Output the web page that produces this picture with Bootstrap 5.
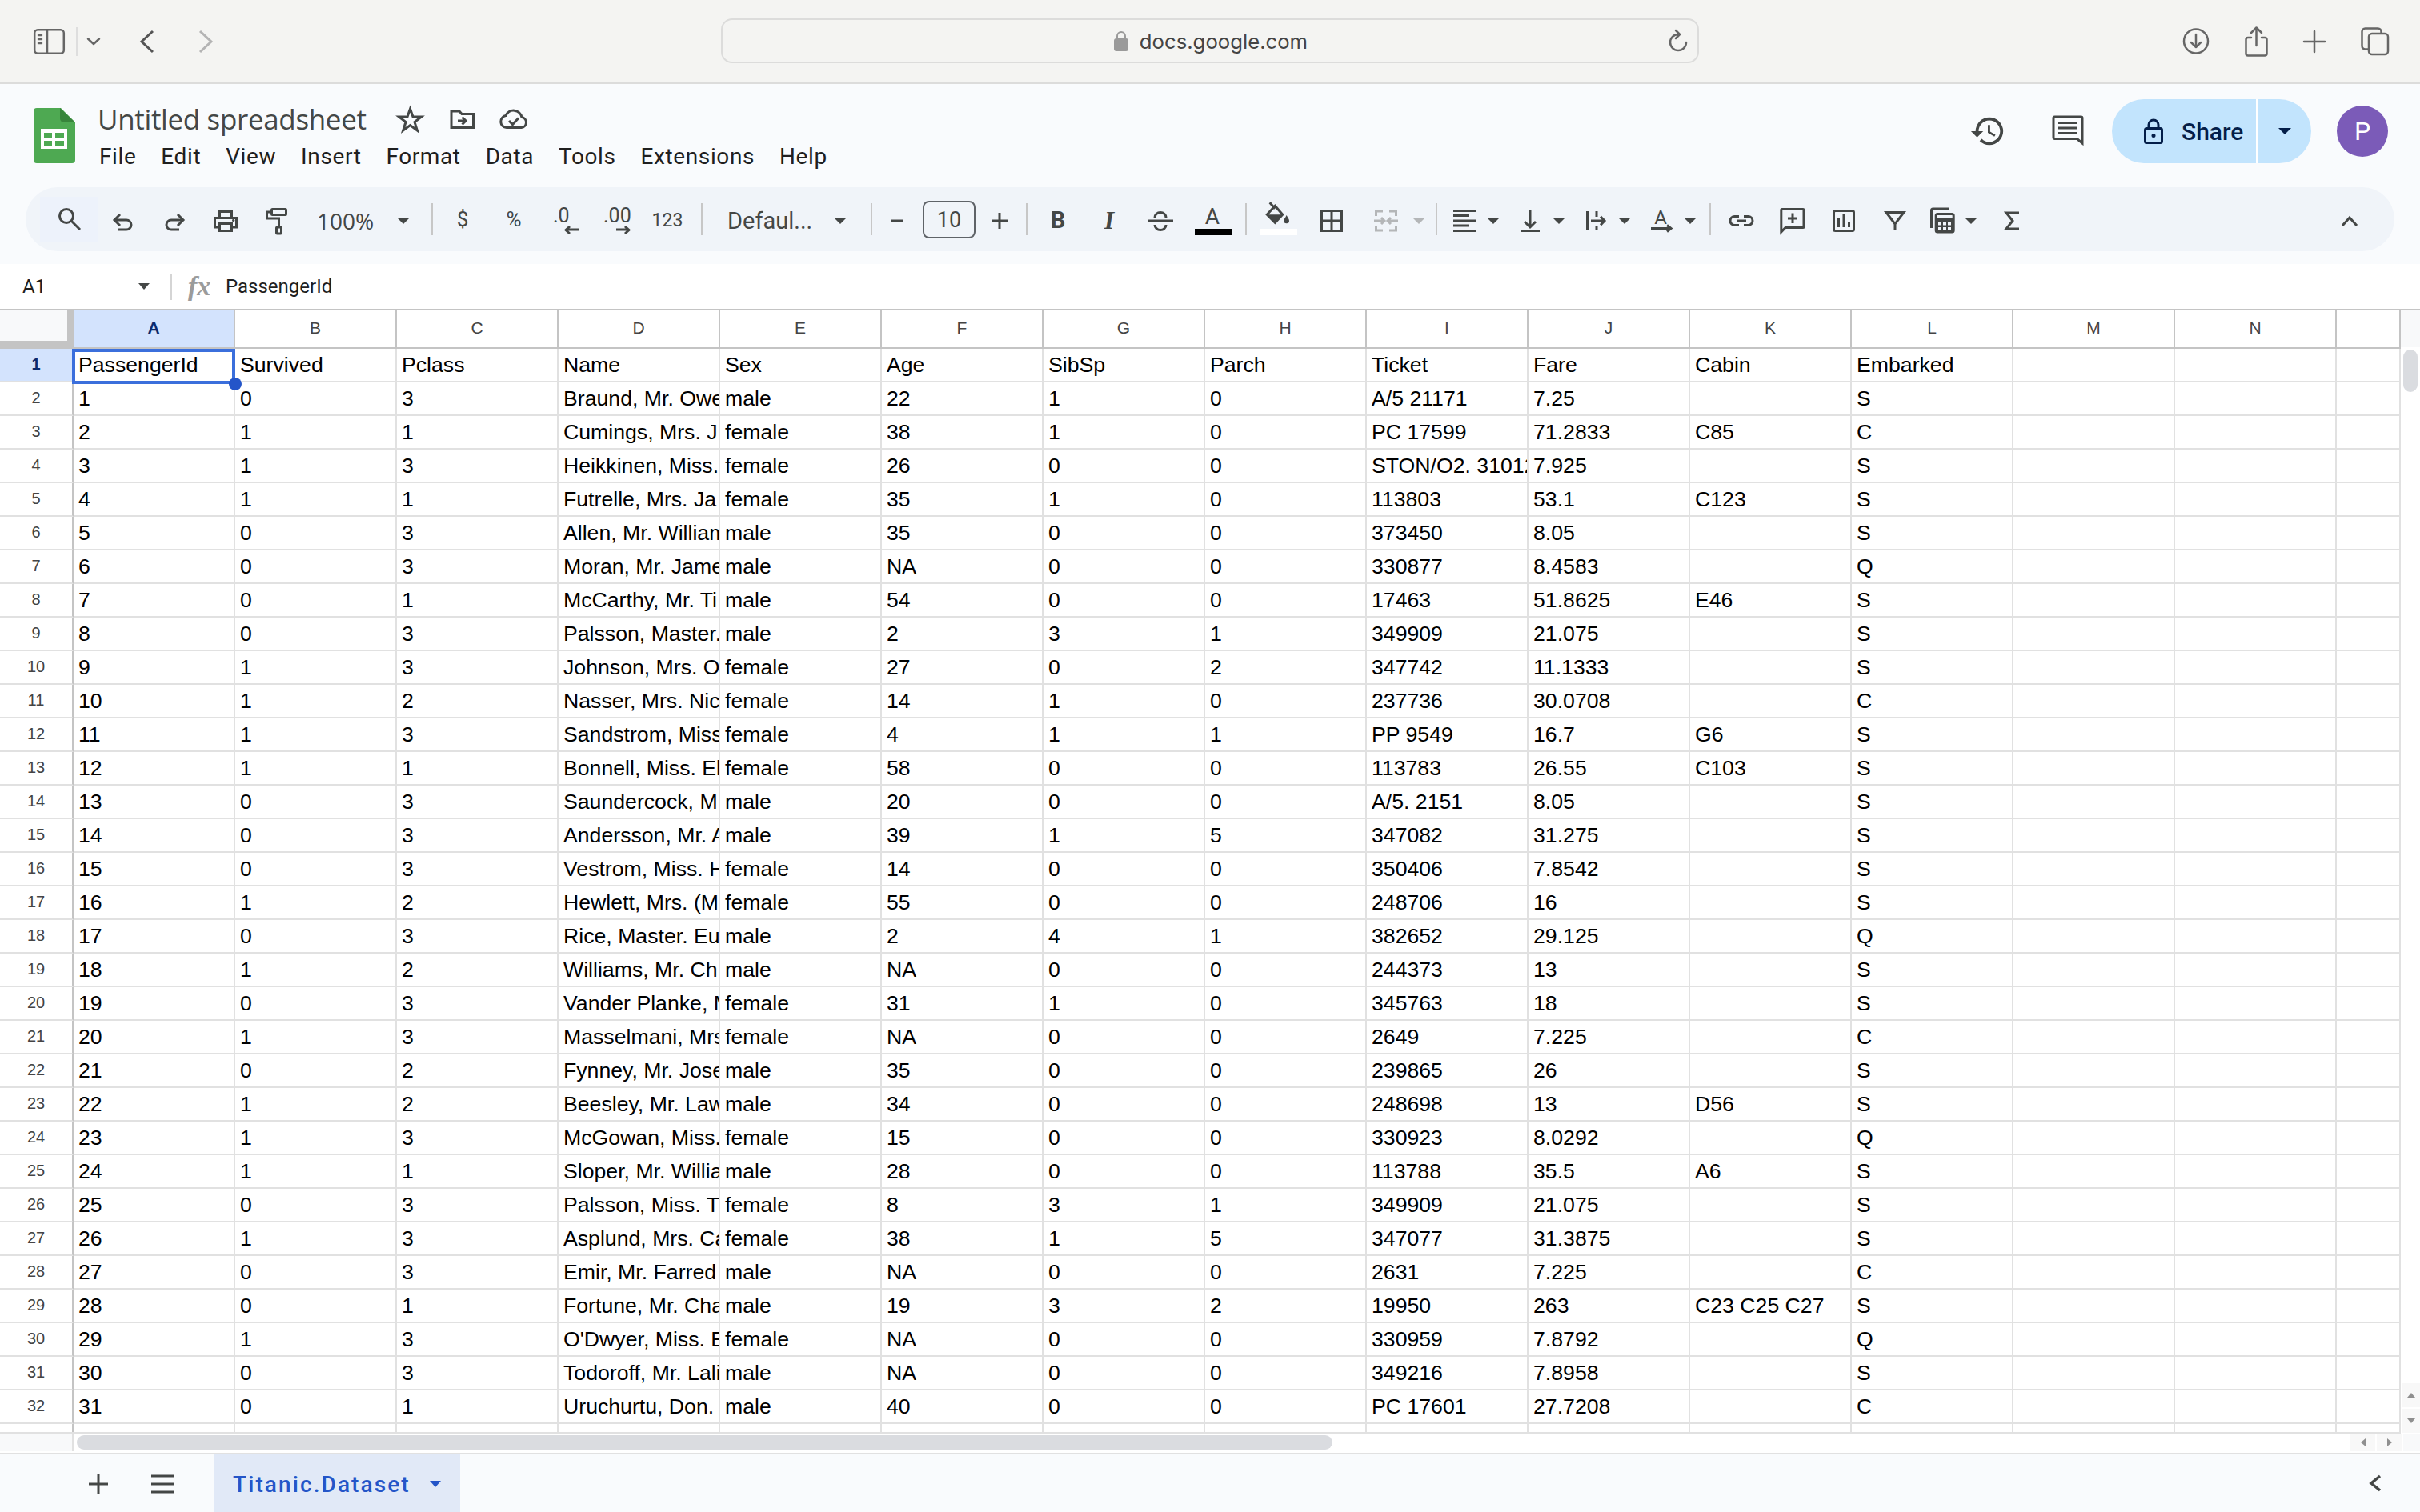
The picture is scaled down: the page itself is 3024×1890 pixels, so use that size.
<!DOCTYPE html>
<html lang="en">
<head>
<meta charset="utf-8">
<title>Untitled spreadsheet</title>
<link rel="stylesheet" href="https://cdn.jsdelivr.net/npm/bootstrap@5.3.0/dist/css/bootstrap.min.css">
<style>
html,body{width:3024px;height:1890px;overflow:hidden;background:#fff;margin:0}
svg{overflow:visible;flex:none;display:block}
.ic{fill:none;stroke:#444746;stroke-width:3}
.ic-off{stroke:#b4b6b8}
.ict{fill:#444746;font-family:Roboto,sans-serif}
.si{fill:none;stroke:#666;stroke-width:2.5;stroke-linecap:round;stroke-linejoin:round}
.safari{height:105px;background:#f4f4f2;border-bottom:2px solid #dcdcdb;flex:none}
.safari-left{width:901px;padding-left:42px}
.s-div{width:2px;height:36px;background:#dedede;margin-left:14px}
.s-chev{margin-left:12px}
.s-back{margin-left:49px}
.s-fwd{margin-left:55px}
.urlbar{width:1222px;height:56px;margin-top:-2px;border:2.5px solid #dcdcdb;border-radius:14px;font:25.7px Inter,sans-serif;color:#444;padding-left:2px}
.url-text{padding-top:2px;margin-left:14px}
.urlbar .reload{right:12px;top:12px}
.safari-right{padding-left:605px}
.sr-45{margin-left:45px}
.sr-44{margin-left:44px}
.app-head{height:225px;background:#f9fbfd;flex:none}
.head-top{height:129px;padding-left:42px;padding-right:40px}
.logo{margin-top:30px}
.doc-name{font:35px/46px "Open Sans",sans-serif;color:#444746;letter-spacing:-.35px;margin-left:28px}
.doc-col{margin-top:-1px}
.doc-title-row{margin-top:22px}
.star-ic{margin-left:38px}
.folder-ic{margin-left:33px}
.cloud-ic{margin-left:31px}
.menu-row{font:28px/40px Roboto,sans-serif;letter-spacing:.6px;color:#1f1f1f;margin-left:30px;gap:31px;margin-top:4px}
.head-right{margin-top:19px}
.comment-ic{margin-left:57px;margin-right:35px}
.share-btn{width:249px;height:80px;border-radius:40px;background:#c2e4fd;color:#041e49;font:500 30px Roboto,sans-serif}
.share-main{width:182px;border-right:2px solid #fff;height:100%;padding-left:40px;gap:23px}
.share-drop{flex:1;height:100%}
.avatar{width:64px;height:64px;background:#7b5bb8;color:#fff;font:32px Roboto,sans-serif;margin-left:32px}
.toolbar{height:80px;margin:0 32px;background:#f0f4f9;border-radius:40px;padding:4px 24px 0 18px}
.tb{width:64px;height:56px;flex:none}
.tb-search{width:72px;height:56px;background:#edf2fb;margin-top:-4px;padding-top:4px;flex:none}
.cr{width:0;height:0;border-left:8px solid transparent;border-right:8px solid transparent;border-top:8px solid #444746;flex:none}
.cr-off{border-top-color:#b4b6b8}
.cr-navy{border-top-color:#041e49}
.tb-zoom{width:159px;padding:0 25px 0 18px;font:28px "Open Sans",sans-serif;color:#444746;height:56px;flex:none}
.tb-sep{width:2px;height:40px;background:#c7c7c7;flex:none;margin-top:-4px}
.m5{margin-left:2px;margin-right:5px}
.m10{margin-left:10px;margin-right:0}
.tb-font{width:210px;padding:0 30px 0 31px;font:29px Roboto,sans-serif;color:#444746;height:56px;flex:none}
.tb-minus{width:50px;margin-left:6px;height:56px;flex:none}
.tb-size{width:66px;height:47px;margin-left:7px;margin-top:-3px;border:2px solid #5f6368;border-radius:8px;font:27px Roboto,sans-serif;color:#444746;flex:none}
.tb-plus{width:60px;height:56px;flex:none}
.tb-wide{width:66px;height:56px;flex:none}
.tb-fillbtn{margin-left:7px}
.tb-sep-3{margin-left:3px;margin-right:6px}
.tb-sep-8{margin-left:8px}
.tb-sep-86{margin-left:8px;margin-right:6px}
.tb-drop{width:82px;height:56px;padding-left:16px;flex:none}
.tb-drop .cr{margin-left:10px}
.tb-rotate{width:86px}
.tb-merge{width:89px;padding-left:17px}
.tb-merge .cr{margin-left:15px}
.tb-func{width:83px;padding-left:9px}
.formula{height:56px;background:#fff;flex:none;font:24px Roboto,sans-serif;color:#1f1f1f;padding-left:28px}
.name-box{width:167px}
.name-box .cr{border-left-width:7px;border-right-width:7px;border-top-width:8px;margin-left:auto;margin-right:8px}
.name-sep{width:2px;height:33px;background:#d5d5d5;margin-left:18px}
.fx{font:italic 700 34px "Liberation Serif",serif;color:#9b9b9b;margin-left:20px;width:47px}
.grid-area{height:1406px;flex:none;border-top:2px solid #c4c4c4}
.grid-clip{width:3000px;height:1402px;overflow:hidden}
.grid-line{height:2px;background:#e1e1e1}
.sheet-grid{table-layout:fixed;width:3000px;border-collapse:separate;border-spacing:0;margin:0;--bs-table-bg:#fff}
.cw-r{width:92px}.cw{width:202px}.cw-o{width:80px}
.sheet-grid td{height:42px;padding:1px 6px 0;font:26.67px/39px "Liberation Sans",Arial,sans-serif;color:#000;white-space:nowrap;overflow:hidden;border:0;border-right:2px solid #e1e1e1;border-bottom:2px solid #e1e1e1;vertical-align:top;background:#fff}
.sheet-grid th{height:42px;padding:0;text-align:center;font:400 20px/38px "Liberation Sans",Arial,sans-serif;color:#444;border:0;border-right:2px solid #c4c4c4;border-bottom:2px solid #e1e1e1;background:#fff;vertical-align:top}
.sheet-grid thead th{height:48px;font-size:21px;line-height:44px;border-bottom:2px solid #c4c4c4;border-right:2px solid #c4c4c4}
.sheet-grid thead th.corner{background:#f8f9fa;border-right:8px solid #c4c4c4;border-bottom:10px solid #c4c4c4}
.sheet-grid th.sel{background:#d3e3fd;color:#0b2a6b;font-weight:700}
.sel-box{left:90px;top:48px;width:204px;height:44px;border:4px solid #3b6fdc}
.sel-dot{left:286px;top:84px;width:16px;height:16px;border-radius:50%;background:#2455c9}
.vbar{width:24px;flex:none}
.vbar-top{height:46px;background:#f8f9fa}
.vthumb{width:18px;height:53px;background:#dadce0;border-radius:9px;margin:3px 0 0 3px}
.vbtn{height:30px;width:22px;background:#f8f8f8;margin:1px 0 1px 2px}
.aup,.adn{width:0;height:0;border-left:5.5px solid transparent;border-right:5.5px solid transparent}
.aup{border-bottom:6px solid #8f8f8f}
.adn{border-top:6px solid #8f8f8f}
.hbar{height:26px;flex:none;border-bottom:2px solid #e1e1e1;background:#fff}
.hleft{width:92px;height:22px;background:#f8f9fa;border-right:2px solid #e1e1e1;flex:none}
.hthumb{width:1569px;height:18px;margin:2px 0 0 4px;background:#dadce0;border-radius:9px}
.hbtn{width:31px;height:22px;background:#f8f8f8;margin-right:2px;flex:none}
.hcorner{width:21px;height:22px;background:#f8f9fa;flex:none}
.alft,.argt{width:0;height:0;border-top:5.5px solid transparent;border-bottom:5.5px solid transparent}
.alft{border-right:6px solid #8f8f8f}
.argt{border-left:6px solid #8f8f8f}
.sheet-bar{height:72px;background:#f9fbfd;flex:none;padding-left:105px;padding-right:48px}
.sheet-btn{width:80px;padding-top:2px}
.sheet-tab{width:308px;height:72px;margin-left:2px;padding-top:2px;background:#e1e9f7;color:#2455c8;font:500 28px Roboto,sans-serif;letter-spacing:2.1px;padding-left:24px}
.sheet-tab .cr{border-top-color:#2455c8;border-left-width:7px;border-right-width:7px;margin-left:24px}
</style>
</head>
<body>
<div class="d-flex flex-column vh-100">

<header class="safari d-flex align-items-center">
  <div class="safari-left d-flex align-items-center">
    <svg width="39" height="32" viewBox="0 0 39 32"><rect class="si" x="1.2" y="1.2" width="36.6" height="29.6" rx="4"/><path class="si" d="M17 1.5V30.5"/><path class="si" d="M6 8h4M6 13h4M6 18h4" stroke-width="2"/></svg>
    <span class="s-div"></span>
    <svg class="s-chev" width="16" height="10" viewBox="0 0 16 10"><path class="si" d="M1 1.500 L8 8 L15 1.500" stroke-width="2"/></svg>
    <svg class="s-back" width="19" height="28" viewBox="0 0 19 28"><path d="M17 1 L3 14 L17 27" fill="none" stroke="#555" stroke-width="3"/></svg>
    <svg class="s-fwd" width="18" height="28" viewBox="0 0 18 28"><path d="M2 1 L16 14 L2 27" fill="none" stroke="#b4b4b4" stroke-width="3"/></svg>
  </div>
  <div class="urlbar position-relative d-flex align-items-center justify-content-center">
    <svg width="18" height="26" viewBox="0 0 18 26"><path d="M4 12V7a5 5 0 0 1 10 0v5" fill="none" stroke="#9a9a9a" stroke-width="2"/><rect x="0" y="10" width="18" height="16" rx="3" fill="#9a9a9a"/></svg>
    <span class="url-text">docs.google.com</span>
    <svg class="position-absolute reload" width="24" height="28" viewBox="0 0 24 28"><path class="si" d="M12 6A10 10 0 1 0 22 16" stroke-width="2"/><path class="si" d="M9 1 L14 6 L9 11" stroke-width="2"/></svg>
  </div>
  <div class="safari-right d-flex align-items-center">
    <svg width="32" height="33" viewBox="0 0 32 33"><circle class="si" cx="16" cy="16.5" r="15"/><path class="si" d="M16 8V24M10 18l6 6 6-6"/></svg>
    <svg class="sr-45" width="29" height="38" viewBox="0 0 29 38"><path class="si" d="M8 14H4a2.500 2.500 0 0 0-2.500 2.500V34a2.500 2.500 0 0 0 2.500 2.500H25a2.500 2.500 0 0 0 2.500-2.500V16.500A2.500 2.500 0 0 0 25 14H21"/><path class="si" d="M14.500 24V1.500M8 8L14.500 1.500L21 8"/></svg>
    <svg class="sr-44" width="28" height="28" viewBox="0 0 28 28"><path class="si" d="M14 1V27M1 14H27"/></svg>
    <svg class="sr-44" width="35" height="35" viewBox="0 0 35 35"><rect class="si" x="1.500" y="1.500" width="24" height="26" rx="4"/><rect x="10" y="8" width="24" height="26" rx="4" fill="#f4f4f2" stroke="#666" stroke-width="2.500"/></svg>
  </div>
</header>

<section class="app-head">
  <div class="head-top d-flex align-items-start">
    <svg class="logo" width="52" height="69" viewBox="0 0 52 69"><path d="M4 0H34L52 18V65a4 4 0 0 1-4 4H4a4 4 0 0 1-4-4V4a4 4 0 0 1 4-4Z" fill="#4ea952"/><path d="M33 0L52 18H38a5 5 0 0 1-5-5Z" fill="#38853b"/><rect x="9" y="26" width="33" height="25" fill="#fff"/><path d="M13 31H23V37.500H13ZM27 31H38V37.500H27ZM13 41H23V47H13ZM27 41H38V47H27Z" fill="#4ea952"/></svg>
    <div class="doc-col d-flex flex-column">
      <div class="doc-title-row d-flex align-items-center">
        <span class="doc-name">Untitled spreadsheet</span>
        <svg class="star-ic" width="33" height="32" viewBox="0 0 33 32"><path class="ic" d="M16.500 3L20 13H30.500L22 19.500L25.300 30L16.500 23.500L7.700 30L11 19.500L2.500 13H13Z"/></svg>
        <svg class="folder-ic" width="31" height="24" viewBox="0 0 31 24"><path class="ic" d="M2 22.500V2H12L15 5.500H29.500V22.500Z"/><path class="ic" d="M10 14H20M15.500 9.500L20 14L15.500 18.500" stroke-width="2.500"/></svg>
        <svg class="cloud-ic" width="36" height="24" viewBox="0 0 36 24"><path class="ic" d="M9 22.500a7.500 7.500 0 0 1-1-14.900 10.500 10.500 0 0 1 20 2 6.500 6.500 0 0 1-.5 12.900Z"/><path class="ic" d="M12 14L16.500 18.500L24 10.500" stroke-width="2.500"/></svg>
      </div>
      <nav class="menu-row d-flex">
        <span>File</span><span>Edit</span><span>View</span><span>Insert</span><span>Format</span><span>Data</span><span>Tools</span><span>Extensions</span><span>Help</span>
      </nav>
    </div>
    <div class="head-right ms-auto d-flex align-items-center">
      <svg width="46" height="46" viewBox="0 0 24 24"><path fill="#444746" d="M13 3a9 9 0 0 0-9 9H1l3.890 3.890.070.140L9 12H6c0-3.870 3.130-7 7-7s7 3.130 7 7-3.130 7-7 7c-1.930 0-3.680-.790-4.940-2.060l-1.420 1.420A8.954 8.954 0 0 0 13 21a9 9 0 0 0 0-18zm-1 5v5l4.280 2.540.720-1.210-3.500-2.080V8H12z"/></svg>
      <svg class="comment-ic" width="40" height="40" viewBox="0 0 40 40"><path class="ic" d="M3.500 2H36.500a1.500 1.500 0 0 1 1.500 1.500V35L31.500 29.500H3.500a1.500 1.500 0 0 1-1.500-1.500V3.500A1.500 1.500 0 0 1 3.500 2Z" stroke-width="3.500"/><path class="ic" d="M8 9.500H32M8 16H32M8 22.500H32" stroke-width="3.500"/></svg>
      <div class="share-btn d-flex align-items-center">
        <div class="share-main d-flex align-items-center">
          <svg width="24" height="32" viewBox="0 0 24 32"><path d="M6 12V8a6 6 0 0 1 12 0v4" fill="none" stroke="#041e49" stroke-width="3"/><rect x="1.500" y="12.500" width="21" height="18" rx="2" fill="none" stroke="#041e49" stroke-width="3"/><circle cx="12" cy="21.500" r="2.500" fill="#041e49"/></svg>
          <span>Share</span>
        </div>
        <div class="share-drop d-flex align-items-center justify-content-center"><span class="cr cr-navy"></span></div>
      </div>
      <div class="avatar rounded-circle d-flex align-items-center justify-content-center">P</div>
    </div>
  </div>
  <div class="toolbar d-flex align-items-center">
    <div class="tb-search d-flex align-items-center justify-content-center"><svg width="36" height="36" viewBox="0 0 36 36"><circle class="ic" cx="15" cy="12" r="8.500"/><path class="ic" d="M21 18L32 29"/></svg></div>
    <div class="tb d-flex align-items-center justify-content-center"><svg width="36" height="36" viewBox="0 0 36 36"><path class="ic" d="M7 17H22a6 6 0 0 1 0 12H12M14 10L7 17L14 24"/></svg></div>
    <div class="tb d-flex align-items-center justify-content-center"><svg width="36" height="36" viewBox="0 0 36 36"><path class="ic" d="M29 17H14a6 6 0 0 0 0 12H24M22 10L29 17L22 24"/></svg></div>
    <div class="tb d-flex align-items-center justify-content-center"><svg width="36" height="36" viewBox="0 0 36 36"><path class="ic" d="M10.500 13V6.500H25.500V13M10 26H4.500V14.500H31.500V26H26"/><rect class="ic" x="10.500" y="21.500" width="15" height="9"/><circle cx="27.700" cy="17.500" r="1.700" fill="#444746"/></svg></div>
    <div class="tb d-flex align-items-center justify-content-center"><svg width="36" height="36" viewBox="0 0 36 36"><rect class="ic" x="11.500" y="3.500" width="18" height="7" rx="1"/><path class="ic" d="M10 7H5.500V15H20.500V25"/><rect class="ic" x="17.500" y="26" width="6" height="8" rx="1"/></svg></div>
    <div class="tb-zoom d-flex align-items-center"><span>100%</span><span class="cr ms-auto"></span></div>
    <span class="tb-sep m5"></span>
    <div class="tb d-flex align-items-center justify-content-center"><svg width="36" height="36" viewBox="0 0 36 36"><text class="ict" x="18" y="25" text-anchor="middle" font-size="26">$</text></svg></div>
    <div class="tb d-flex align-items-center justify-content-center"><svg width="36" height="36" viewBox="0 0 36 36"><text class="ict" x="18" y="25" text-anchor="middle" font-size="26">%</text></svg></div>
    <div class="tb d-flex align-items-center justify-content-center"><svg width="36" height="36" viewBox="0 0 36 36"><text class="ict" x="3" y="20" font-size="25">.0</text><path class="ic" d="M35 29H20M24 25L19 29.500L24 34" stroke-width="2.500"/></svg></div>
    <div class="tb d-flex align-items-center justify-content-center"><svg width="36" height="36" viewBox="0 0 36 36"><text class="ict" x="2" y="20" font-size="25">.00</text><path class="ic" d="M18 29H33M29 25L34 29.500L29 34" stroke-width="2.500"/></svg></div>
    <div class="tb d-flex align-items-center justify-content-center"><svg width="36" height="36" viewBox="0 0 36 36"><text class="ict" x="18" y="25" text-anchor="middle" font-size="23">123</text></svg></div>
    <span class="tb-sep m10"></span>
    <div class="tb-font d-flex align-items-center"><span>Defaul...</span><span class="cr ms-auto"></span></div>
    <span class="tb-sep"></span>
    <div class="tb-minus d-flex align-items-center justify-content-center"><svg width="36" height="36" viewBox="0 0 36 36"><path class="ic" d="M10 18H26"/></svg></div>
    <div class="tb-size d-flex align-items-center justify-content-center">10</div>
    <div class="tb-plus d-flex align-items-center justify-content-center"><svg width="36" height="36" viewBox="0 0 36 36"><path class="ic" d="M8 18H28M18 8V28"/></svg></div>
    <span class="tb-sep tb-sep-3"></span>
    <div class="tb d-flex align-items-center justify-content-center"><svg width="36" height="36" viewBox="0 0 36 36"><text class="ict" x="18" y="27" text-anchor="middle" font-size="29" font-weight="700">B</text></svg></div>
    <div class="tb d-flex align-items-center justify-content-center"><svg width="36" height="36" viewBox="0 0 36 36"><text x="18" y="28" text-anchor="middle" font-size="31" font-weight="700" font-style="italic" font-family="Liberation Serif,serif" fill="#444746">I</text></svg></div>
    <div class="tb d-flex align-items-center justify-content-center"><svg width="36" height="36" viewBox="0 0 36 36"><path class="ic" d="M2 18H34" stroke-width="2.500"/><path class="ic" d="M11 14a7 6.500 0 0 1 14 0M11 23a7 6.500 0 0 0 14 0"/></svg></div>
    <div class="tb d-flex align-items-center justify-content-center"><svg width="36" height="36" viewBox="0 0 36 36"><text class="ict" x="19" y="22" text-anchor="middle" font-size="28">A</text><rect x="-3" y="28" width="46" height="8" fill="#000"/></svg></div>
    <span class="tb-sep m10"></span>
    <div class="tb-wide tb-fillbtn d-flex align-items-center justify-content-center"><svg width="36" height="36" viewBox="0 0 36 36"><path class="ic" d="M6.700 -4.700L13.300 2.700M13.300 -0.700L3.300 10.300L13.300 20.300L22.700 10.300Z"/><path d="M3.300 10.300L13.300 20.300L22.700 10.300Z" fill="#444746"/><path d="M27.700 11C29 14 31 15.500 31 18a3.300 3.300 0 0 1-6.600 0C24.400 15.500 26.400 14 27.700 11Z" fill="#444746"/><rect x="-5" y="28" width="46" height="8" fill="#fff"/></svg></div>
    <div class="tb-wide d-flex align-items-center justify-content-center"><svg width="36" height="36" viewBox="0 0 36 36"><rect class="ic" x="5.500" y="5.500" width="25" height="25"/><path class="ic" d="M18 5V31M5 18H31"/></svg></div>
    <div class="tb-drop tb-merge d-flex align-items-center"><svg width="36" height="36" viewBox="0 0 36 36"><path class="ic ic-off" d="M5.500 12V6H14M5.500 24V30H14M30.500 12V6H22M30.500 24V30H22M3 18H15M12 14L16 18L12 22M33 18H21M24 14L20 18L24 22"/></svg><span class="cr cr-off"></span></div>
    <span class="tb-sep tb-sep-8"></span>
    <div class="tb-drop d-flex align-items-center"><svg width="36" height="36" viewBox="0 0 36 36"><path class="ic" d="M4 5.500H32M4 11.500H24M4 18H32M4 24H24M4 30.500H32"/></svg><span class="cr"></span></div>
    <div class="tb-drop d-flex align-items-center"><svg width="36" height="36" viewBox="0 0 36 36"><path class="ic" d="M18 4V26M11 19L18 26L25 19M6 30.500H30"/></svg><span class="cr"></span></div>
    <div class="tb-drop d-flex align-items-center"><svg width="36" height="36" viewBox="0 0 36 36"><path class="ic" d="M7.500 6V30M19 6V13M19 24V30M12 18H29M24 12.700L29 18L24 23.300"/></svg><span class="cr"></span></div>
    <div class="tb-drop tb-rotate d-flex align-items-center"><svg width="36" height="36" viewBox="0 0 36 36"><text class="ict" x="17" y="22" text-anchor="middle" font-size="24">A</text><path class="ic" d="M5 27.500H29M25 23.500L30 27.500L25 31.500" stroke-width="2.500"/></svg><span class="cr"></span></div>
    <span class="tb-sep tb-sep-86"></span>
    <div class="tb d-flex align-items-center justify-content-center"><svg width="36" height="36" viewBox="0 0 36 36"><path class="ic" d="M15 12.500H9.500a5.500 5.500 0 0 0 0 11H15M21 12.500H26.500a5.500 5.500 0 0 1 0 11H21M12 18H24" stroke-width="3.200"/></svg></div>
    <div class="tb d-flex align-items-center justify-content-center"><svg width="36" height="36" viewBox="0 0 36 36"><path class="ic" d="M3.800 4.500a1 1 0 0 1 1-1H31a1 1 0 0 1 1 1V25.500a1 1 0 0 1-1 1H9L3.800 32Z"/><path class="ic" d="M18 8.500V21M12 15H24"/></svg></div>
    <div class="tb d-flex align-items-center justify-content-center"><svg width="36" height="36" viewBox="0 0 36 36"><rect class="ic" x="5.500" y="5.500" width="25" height="25" rx="2"/><path class="ic" d="M11.500 15V26M18 10V26M24.500 20V26" stroke-width="2.500"/></svg></div>
    <div class="tb d-flex align-items-center justify-content-center"><svg width="36" height="36" viewBox="0 0 36 36"><path class="ic" d="M7 7.500H29L18 22ZM18 21V30"/></svg></div>
    <div class="tb-drop tb-func d-flex align-items-center"><svg width="36" height="36" viewBox="0 0 36 36"><path class="ic" d="M4.500 27V5a2 2 0 0 1 2-2H26"/><rect class="ic" x="10.200" y="9.500" width="22" height="22.500" rx="2"/><path d="M10 15H32V32H10Z" fill="#444746"/><path d="M13 19.500h4v4h-4ZM19 19.500h4v4h-4ZM25 19.500h4v4h-4ZM13 26h4v4h-4ZM19 26h4v4h-4ZM25 26h4v4h-4Z" fill="#f0f4f9"/></svg><span class="cr"></span></div>
    <div class="tb d-flex align-items-center justify-content-center"><svg width="36" height="36" viewBox="0 0 36 36"><path class="ic" d="M26 8H10L18 18L10 28H26" stroke-width="3.500"/></svg></div>
    <div class="tb ms-auto d-flex align-items-center justify-content-center"><svg width="36" height="36" viewBox="0 0 36 36"><path class="ic" d="M9 24L18 14L27 24"/></svg></div>
  </div>
</section>

<section class="formula d-flex align-items-center">
  <div class="name-box d-flex align-items-center"><span>A1</span><span class="cr"></span></div>
  <span class="name-sep"></span>
  <span class="fx">fx</span>
  <span>PassengerId</span>
</section>

<section class="grid-area d-flex">
  <div class="flex-shrink-0">
    <div class="grid-clip position-relative">
      <table class="table sheet-grid">
        <colgroup><col class="cw-r"><col span="14" class="cw"><col class="cw-o"></colgroup>
        <thead><tr><th class="corner"></th><th class="sel">A</th><th>B</th><th>C</th><th>D</th><th>E</th><th>F</th><th>G</th><th>H</th><th>I</th><th>J</th><th>K</th><th>L</th><th>M</th><th>N</th><th></th></tr></thead>
        <tbody>
<tr><th class="sel">1<td>PassengerId<td>Survived<td>Pclass<td>Name<td>Sex<td>Age<td>SibSp<td>Parch<td>Ticket<td>Fare<td>Cabin<td>Embarked<td><td><td>
<tr><th>2<td>1<td>0<td>3<td>Braund, Mr. Owe<td>male<td>22<td>1<td>0<td>A/5 21171<td>7.25<td><td>S<td><td><td>
<tr><th>3<td>2<td>1<td>1<td>Cumings, Mrs. J<td>female<td>38<td>1<td>0<td>PC 17599<td>71.2833<td>C85<td>C<td><td><td>
<tr><th>4<td>3<td>1<td>3<td>Heikkinen, Miss.<td>female<td>26<td>0<td>0<td>STON/O2. 31012<td>7.925<td><td>S<td><td><td>
<tr><th>5<td>4<td>1<td>1<td>Futrelle, Mrs. Ja<td>female<td>35<td>1<td>0<td>113803<td>53.1<td>C123<td>S<td><td><td>
<tr><th>6<td>5<td>0<td>3<td>Allen, Mr. William<td>male<td>35<td>0<td>0<td>373450<td>8.05<td><td>S<td><td><td>
<tr><th>7<td>6<td>0<td>3<td>Moran, Mr. Jame<td>male<td>NA<td>0<td>0<td>330877<td>8.4583<td><td>Q<td><td><td>
<tr><th>8<td>7<td>0<td>1<td>McCarthy, Mr. Ti<td>male<td>54<td>0<td>0<td>17463<td>51.8625<td>E46<td>S<td><td><td>
<tr><th>9<td>8<td>0<td>3<td>Palsson, Master.<td>male<td>2<td>3<td>1<td>349909<td>21.075<td><td>S<td><td><td>
<tr><th>10<td>9<td>1<td>3<td>Johnson, Mrs. O<td>female<td>27<td>0<td>2<td>347742<td>11.1333<td><td>S<td><td><td>
<tr><th>11<td>10<td>1<td>2<td>Nasser, Mrs. Nic<td>female<td>14<td>1<td>0<td>237736<td>30.0708<td><td>C<td><td><td>
<tr><th>12<td>11<td>1<td>3<td>Sandstrom, Miss<td>female<td>4<td>1<td>1<td>PP 9549<td>16.7<td>G6<td>S<td><td><td>
<tr><th>13<td>12<td>1<td>1<td>Bonnell, Miss. El<td>female<td>58<td>0<td>0<td>113783<td>26.55<td>C103<td>S<td><td><td>
<tr><th>14<td>13<td>0<td>3<td>Saundercock, M<td>male<td>20<td>0<td>0<td>A/5. 2151<td>8.05<td><td>S<td><td><td>
<tr><th>15<td>14<td>0<td>3<td>Andersson, Mr. A<td>male<td>39<td>1<td>5<td>347082<td>31.275<td><td>S<td><td><td>
<tr><th>16<td>15<td>0<td>3<td>Vestrom, Miss. H<td>female<td>14<td>0<td>0<td>350406<td>7.8542<td><td>S<td><td><td>
<tr><th>17<td>16<td>1<td>2<td>Hewlett, Mrs. (M<td>female<td>55<td>0<td>0<td>248706<td>16<td><td>S<td><td><td>
<tr><th>18<td>17<td>0<td>3<td>Rice, Master. Eu<td>male<td>2<td>4<td>1<td>382652<td>29.125<td><td>Q<td><td><td>
<tr><th>19<td>18<td>1<td>2<td>Williams, Mr. Ch<td>male<td>NA<td>0<td>0<td>244373<td>13<td><td>S<td><td><td>
<tr><th>20<td>19<td>0<td>3<td>Vander Planke, M<td>female<td>31<td>1<td>0<td>345763<td>18<td><td>S<td><td><td>
<tr><th>21<td>20<td>1<td>3<td>Masselmani, Mrs<td>female<td>NA<td>0<td>0<td>2649<td>7.225<td><td>C<td><td><td>
<tr><th>22<td>21<td>0<td>2<td>Fynney, Mr. Jose<td>male<td>35<td>0<td>0<td>239865<td>26<td><td>S<td><td><td>
<tr><th>23<td>22<td>1<td>2<td>Beesley, Mr. Law<td>male<td>34<td>0<td>0<td>248698<td>13<td>D56<td>S<td><td><td>
<tr><th>24<td>23<td>1<td>3<td>McGowan, Miss.<td>female<td>15<td>0<td>0<td>330923<td>8.0292<td><td>Q<td><td><td>
<tr><th>25<td>24<td>1<td>1<td>Sloper, Mr. Willia<td>male<td>28<td>0<td>0<td>113788<td>35.5<td>A6<td>S<td><td><td>
<tr><th>26<td>25<td>0<td>3<td>Palsson, Miss. T<td>female<td>8<td>3<td>1<td>349909<td>21.075<td><td>S<td><td><td>
<tr><th>27<td>26<td>1<td>3<td>Asplund, Mrs. Ca<td>female<td>38<td>1<td>5<td>347077<td>31.3875<td><td>S<td><td><td>
<tr><th>28<td>27<td>0<td>3<td>Emir, Mr. Farred<td>male<td>NA<td>0<td>0<td>2631<td>7.225<td><td>C<td><td><td>
<tr><th>29<td>28<td>0<td>1<td>Fortune, Mr. Cha<td>male<td>19<td>3<td>2<td>19950<td>263<td>C23 C25 C27<td>S<td><td><td>
<tr><th>30<td>29<td>1<td>3<td>O'Dwyer, Miss. E<td>female<td>NA<td>0<td>0<td>330959<td>7.8792<td><td>Q<td><td><td>
<tr><th>31<td>30<td>0<td>3<td>Todoroff, Mr. Lali<td>male<td>NA<td>0<td>0<td>349216<td>7.8958<td><td>S<td><td><td>
<tr><th>32<td>31<td>0<td>1<td>Uruchurtu, Don.<td>male<td>40<td>0<td>0<td>PC 17601<td>27.7208<td><td>C<td><td><td>
<tr><th><td><td><td><td><td><td><td><td><td><td><td><td><td><td><td>
        </tbody>
      </table>
      <div class="sel-box position-absolute"></div>
      <div class="sel-dot position-absolute"></div>
    </div>
    <div class="grid-line"></div>
  </div>
  <aside class="vbar d-flex flex-column">
    <div class="vbar-top"></div>
    <div class="vthumb"></div>
    <div class="vbtn mt-auto d-flex align-items-center justify-content-center"><span class="aup"></span></div>
    <div class="vbtn d-flex align-items-center justify-content-center"><span class="adn"></span></div>
  </aside>
</section>

<section class="hbar d-flex">
  <div class="hleft"></div>
  <div class="hthumb"></div>
  <div class="hbtn ms-auto d-flex align-items-center justify-content-center"><span class="alft"></span></div>
  <div class="hbtn d-flex align-items-center justify-content-center"><span class="argt"></span></div>
  <div class="hcorner"></div>
</section>

<footer class="sheet-bar d-flex align-items-center">
  <div class="sheet-btn"><svg width="36" height="36" viewBox="0 0 36 36"><path class="ic" d="M18 6V30M6 18H30"/></svg></div>
  <div class="sheet-btn"><svg width="36" height="36" viewBox="0 0 36 36"><path class="ic" d="M4 8H32M4 18H32M4 28H32" stroke-width="3.500"/></svg></div>
  <div class="sheet-tab d-flex align-items-center"><span>Titanic.Dataset</span><span class="cr"></span></div>
  <svg class="ms-auto" width="16" height="22" viewBox="0 0 16 22"><path d="M14 2L3 11L14 20" fill="none" stroke="#444746" stroke-width="3.500"/></svg>
</footer>
</div>
<script src="https://cdn.jsdelivr.net/npm/bootstrap@5.3.0/dist/js/bootstrap.bundle.min.js"></script>
</body>
</html>
